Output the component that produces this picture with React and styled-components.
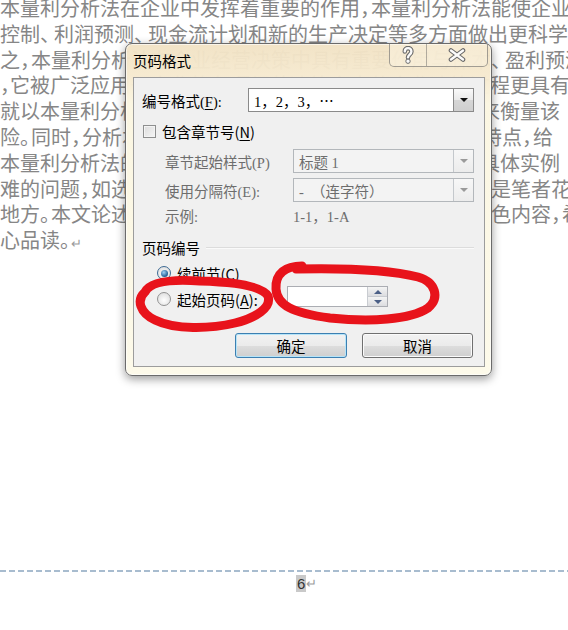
import React from "react";
import styled, { createGlobalStyle } from "styled-components";

const GlobalStyle = createGlobalStyle`
  html, body {
    margin: 0;
    padding: 0;
    background: #ffffff;
  }
`;

const Page = styled.div`
  position: relative;
  width: 568px;
  height: 630px;
  overflow: hidden;
  background: #ffffff;
  display: flex;
  flex-direction: column;
`;

const DocText = styled.div`
  margin-top: -5px;
  font-family: "Noto Sans CJK SC", sans-serif;
  font-size: 20px;
  color: #868686;
`;

const Line = styled.div`
  height: 25.8px;
  line-height: 25.8px;
  white-space: nowrap;
  overflow: hidden;
`;

const Tight = styled.span`
  display: inline-block;
  vertical-align: top;
  width: ${(p) => p.$w || 11}px;
  overflow: hidden;
`;

const Mark = styled.span`
  font-size: 13px;
  color: #9a9a9a;
`;

const Footer = styled.div`
  margin-top: auto;
  height: 60px;
  display: flex;
  flex-direction: column;
`;

const Rule = styled.div`
  height: 2px;
  background: repeating-linear-gradient(90deg, #a8bccf 0 6px, transparent 6px 9px);
`;

const PageNum = styled.div`
  margin-top: 3px;
  padding-left: 296px;
  display: flex;
  align-items: center;
  font-family: "Liberation Sans", sans-serif;
  font-size: 15px;
  color: #333;
`;

const NumBox = styled.span`
  background: #c9c9c9;
  padding: 0 1px;
  line-height: 17px;
`;

/* dialog */

const Dialog = styled.div`
  position: absolute;
  left: 125px;
  top: 43px;
  width: 367px;
  height: 333px;
  box-sizing: border-box;
  border: 1px solid #6b6b6b;
  border-radius: 7px;
  background: linear-gradient(
    180deg,
    rgba(241, 226, 196, 0.96) 0,
    rgba(246, 234, 208, 0.97) 33px,
    #fbf6e2 60px,
    #fdfaea 100%
  );
  box-shadow: 0 3px 10px rgba(0, 0, 0, 0.4), inset 0 0 0 1px rgba(255, 255, 255, 0.6);
  padding: 0 6px 8px 7px;
  display: flex;
  flex-direction: column;
`;

const TitleBar = styled.div`
  height: 33px;
  display: flex;
  align-items: flex-start;
`;

const Title = styled.div`
  padding-top: 7px;
  line-height: 20px;
  font-family: "Noto Sans CJK SC", sans-serif;
  font-size: 14.5px;
  color: #000;
`;

const CaptionButtons = styled.div`
  margin-left: auto;
  margin-right: -3px;
  display: flex;
  height: 22px;
  border: 1px solid rgba(90, 90, 90, 0.55);
  border-top: none;
  border-radius: 0 0 5px 5px;
  overflow: hidden;
  background: rgba(255, 250, 235, 0.35);
`;

const CaptionButton = styled.div`
  width: ${(p) => p.$w}px;
  display: flex;
  align-items: center;
  justify-content: center;
  & + & {
    border-left: 1px solid rgba(90, 90, 90, 0.45);
  }
`;

const Client = styled.div`
  flex: 1;
  border: 1px solid #9c9c9c;
  background: #f0f0f0;
  padding: 10px 10px 8px 8px;
  display: flex;
  flex-direction: column;
  font-family: "Liberation Serif", "Noto Sans CJK SC", serif;
  font-size: 14.5px;
  color: #000;
`;

const Row = styled.div`
  display: flex;
  align-items: center;
  height: ${(p) => p.$h || 24}px;
  margin-top: ${(p) => p.$mt || 0}px;
  padding-left: ${(p) => p.$pl || 0}px;
  color: ${(p) => (p.$disabled ? "#6d6d6d" : "#000")};
`;

const Label = styled.div`
  width: ${(p) => p.$w}px;
  flex: none;
  white-space: nowrap;
`;

const Key = styled.span`
  text-decoration: underline;
  text-underline-offset: 2px;
`;

const Combo = styled.div`
  width: ${(p) => p.$w}px;
  height: 24px;
  box-sizing: border-box;
  border: 1px solid ${(p) => (p.$disabled ? "#b3b7bb" : "#8a8a8a")};
  background: ${(p) => (p.$disabled ? "#f3f3f3" : "#ffffff")};
  color: ${(p) => (p.$disabled ? "#6d6d6d" : "#000")};
  display: flex;
  align-items: center;
  padding-left: 5px;
`;

const ComboText = styled.span`
  flex: 1;
  white-space: nowrap;
`;

const DropButton = styled.div`
  width: 20px;
  height: 22px;
  box-sizing: border-box;
  border-left: 1px solid ${(p) => (p.$disabled ? "#c4c8cc" : "#8a8a8a")};
  background: ${(p) =>
    p.$disabled
      ? "linear-gradient(#f7f7f7, #ececec)"
      : "linear-gradient(#fafafa, #e9e9e9 50%, #d6d6d6 51%, #cfcfcf)"};
  display: flex;
  align-items: center;
  justify-content: center;
  &::after {
    content: "";
    border-left: 4px solid transparent;
    border-right: 4px solid transparent;
    border-top: 4px solid ${(p) => (p.$disabled ? "#9a9a9a" : "#111")};
  }
`;

const CheckBox = styled.span`
  width: 13px;
  height: 13px;
  box-sizing: border-box;
  margin-left: 1px;
  border: 1px solid #8e8f8f;
  background: linear-gradient(135deg, #dcdcdc, #f6f6f6);
  box-shadow: inset 0 0 0 1px #f4f4f4;
`;

const OptionLabel = styled.span`
  margin-left: 6px;
  font-family: "Noto Sans CJK SC", sans-serif;
`;

const GroupHeader = styled.div`
  display: flex;
  align-items: center;
  height: 18px;
  margin-top: 14px;
  font-family: "Noto Sans CJK SC", sans-serif;
  &::after {
    content: "";
    flex: 1;
    margin-left: 6px;
    height: 1px;
    background: #dcdcdc;
    box-shadow: 0 1px 0 #fafafa;
  }
`;

const Option = styled.div`
  display: flex;
  align-items: center;
  width: ${(p) => (p.$w ? `${p.$w}px` : "auto")};
  flex: none;
`;

const Radio = styled.span`
  width: 14px;
  height: 14px;
  box-sizing: border-box;
  border-radius: 50%;
  border: 1px solid ${(p) => (p.$checked ? "#3d6a94" : "#929292")};
  background: radial-gradient(circle at 50% 60%, #ffffff, #d8d8d8);
  display: flex;
  align-items: center;
  justify-content: center;
  &::after {
    content: "";
    display: ${(p) => (p.$checked ? "block" : "none")};
    width: 7px;
    height: 7px;
    border-radius: 50%;
    background: radial-gradient(circle at 40% 35%, #9fd2f5, #1f5d94 70%, #16406b);
  }
`;

const SpinBox = styled.div`
  align-self: flex-start;
  width: 101px;
  height: 21px;
  box-sizing: border-box;
  border: 1px solid #abadb3;
  background: #fff;
  display: flex;
  justify-content: flex-end;
`;

const SpinButtons = styled.div`
  width: 19px;
  display: flex;
  flex-direction: column;
  border-left: 1px solid #c9ccd1;
`;

const SpinHalf = styled.div`
  flex: 1;
  background: linear-gradient(#f4f4f4, #dcdde0);
  display: flex;
  align-items: center;
  justify-content: center;
  & + & {
    border-top: 1px solid #c9ccd1;
  }
  &::after {
    content: "";
    border-left: 4px solid transparent;
    border-right: 4px solid transparent;
    ${(p) => (p.$up ? "border-bottom" : "border-top")}: 4px solid #4b5f86;
  }
`;

const ButtonRow = styled.div`
  display: flex;
  justify-content: flex-end;
  gap: 15px;
  margin-top: 21px;
  padding-right: 1px;
`;

const Button = styled.div`
  width: ${(p) => p.$w}px;
  height: 25px;
  box-sizing: border-box;
  border: 1px solid ${(p) => (p.$primary ? "#3c7fb1" : "#707070")};
  border-radius: 3px;
  background: linear-gradient(#f2f2f2 0, #ebebeb 50%, #dddddd 51%, #cfcfcf 100%);
  box-shadow: inset 0 0 0 1px ${(p) => (p.$primary ? "#b6e4f8" : "#fbfbfb")};
  display: flex;
  align-items: center;
  justify-content: center;
  font-family: "Noto Sans CJK SC", sans-serif;
  font-size: 14.5px;
  color: #000;
`;

const Annotation = styled.svg`
  position: absolute;
  left: 0;
  top: 0;
  pointer-events: none;
`;

function HelpGlyph() {
  return (
    <svg width="14" height="18" viewBox="-7 -9 14 18">
      <g fill="none" strokeLinecap="round" strokeLinejoin="round">
        <path d="M-3.2 -3.6 C-3.2 -8 3.4 -8 3.4 -3.6 C3.4 -0.6 0 -0.4 0 2.4" stroke="#6b6b6b" strokeWidth="4.6" />
        <path d="M-3.2 -3.6 C-3.2 -8 3.4 -8 3.4 -3.6 C3.4 -0.6 0 -0.4 0 2.4" stroke="#fbfbfb" strokeWidth="2.4" />
      </g>
      <circle cx="0" cy="6.2" r="2.2" fill="#fbfbfb" stroke="#6b6b6b" strokeWidth="1" />
    </svg>
  );
}

function CloseGlyph() {
  return (
    <svg width="18" height="14" viewBox="-9 -7 18 14">
      <g fill="none" strokeLinecap="round">
        <path d="M-6 -4.5 L6 4.5 M6 -4.5 L-6 4.5" stroke="#6b6b6b" strokeWidth="4.6" />
        <path d="M-6 -4.5 L6 4.5 M6 -4.5 L-6 4.5" stroke="#fbfbfb" strokeWidth="2.4" />
      </g>
    </svg>
  );
}

const lines = [
  <>本量利分析法在企业中发挥着重要的作用<Tight>，</Tight>本量利分析法能使企业</>,
  <>控制<Tight $w={14}>、</Tight>利润预测<Tight $w={14}>、</Tight>现金流计划和新的生产决定等多方面做出更科学</>,
  <>之<Tight>，</Tight>本量利分析法在企业经营决策中具有重要作用与保本<Tight $w={14}>、</Tight>盈利预测</>,
  <><Tight $w={10}>，</Tight>它被广泛应用于企业的各项经营决策之中使企业决策过程更具有</>,
  <>就以本量利分析法为主要研究对象通过具体的数据分析来衡量该</>,
  <>险<Tight>。</Tight>同时<Tight>，</Tight>分析本量利分析法的基本假设和其应用的主要特点<Tight>，</Tight>给</>,
  <>本量利分析法的应用提供理论依据并结合企业实际情况具体实例</>,
  <>难的问题<Tight>，</Tight>如选择合适的成本性态的分析方法等这些也都是笔者花</>,
  <>地方<Tight>。</Tight>本文论述的内容具有一定的参考价值也是本文的特色内容<Tight>，</Tight>希</>,
  <>心品读<Tight>。</Tight><Mark>↵</Mark></>,
];

export default function App() {
  return (
    <>
      <GlobalStyle />
      <Page>
        <DocText>
          {lines.map((l, i) => (
            <Line key={i}>{l}</Line>
          ))}
        </DocText>

        <Footer>
          <Rule />
          <PageNum>
            <NumBox>6</NumBox>
            <Mark>↵</Mark>
          </PageNum>
        </Footer>

        <Dialog>
          <TitleBar>
            <Title>页码格式</Title>
            <CaptionButtons>
              <CaptionButton $w={36}>
                <HelpGlyph />
              </CaptionButton>
              <CaptionButton $w={60}>
                <CloseGlyph />
              </CaptionButton>
            </CaptionButtons>
          </TitleBar>

          <Client>
            <Row>
              <Label $w={106}>
                编号格式(<Key>F</Key>):
              </Label>
              <Combo $w={226}>
                <ComboText>1，2，3，⋯</ComboText>
                <DropButton />
              </Combo>
            </Row>

            <Row $h={20} $mt={9}>
              <CheckBox />
              <OptionLabel>
                包含章节号(<Key>N</Key>)
              </OptionLabel>
            </Row>

            <Row $mt={8} $pl={23} $disabled>
              <Label $w={128}>章节起始样式(P)</Label>
              <Combo $w={181} $disabled>
                <ComboText>标题 1</ComboText>
                <DropButton $disabled />
              </Combo>
            </Row>

            <Row $mt={5} $pl={23} $disabled>
              <Label $w={128}>使用分隔符(E):</Label>
              <Combo $w={181} $disabled>
                <ComboText>-　（连字符）</ComboText>
                <DropButton $disabled />
              </Combo>
            </Row>

            <Row $h={18} $mt={4} $pl={23} $disabled>
              <Label $w={128}>示例:</Label>
              <span>1-1，1-A</span>
            </Row>

            <GroupHeader>页码编号</GroupHeader>

            <Row $h={20} $mt={7} $pl={15}>
              <Option>
                <Radio $checked />
                <OptionLabel>
                  续前节(<Key>C</Key>)
                </OptionLabel>
              </Option>
            </Row>

            <Row $h={26} $mt={3} $pl={15}>
              <Option $w={130}>
                <Radio />
                <OptionLabel>
                  起始页码(<Key>A</Key>):
                </OptionLabel>
              </Option>
              <SpinBox>
                <SpinButtons>
                  <SpinHalf $up />
                  <SpinHalf />
                </SpinButtons>
              </SpinBox>
            </Row>

            <ButtonRow>
              <Button $w={112} $primary>
                确定
              </Button>
              <Button $w={111}>取消</Button>
            </ButtonRow>
          </Client>
        </Dialog>

        <Annotation width="568" height="630" viewBox="0 0 568 630">
          <g fill="none" stroke="#e8131b" strokeWidth="9" strokeLinecap="round" strokeLinejoin="round">
            <path d="M145 292 C150 282 170 279 200 281 C235 282 262 286 268 296 C272 308 255 318 235 323 C210 329 175 330 155 320 C140 313 136 300 145 292 Z" />
            <path d="M302 266 C286 266 275 273 276 289 C277 305 292 313 330 318 C370 322 410 320 428 308 C440 298 436 282 418 277 C390 270 340 268 296 269" />
          </g>
        </Annotation>
      </Page>
    </>
  );
}
